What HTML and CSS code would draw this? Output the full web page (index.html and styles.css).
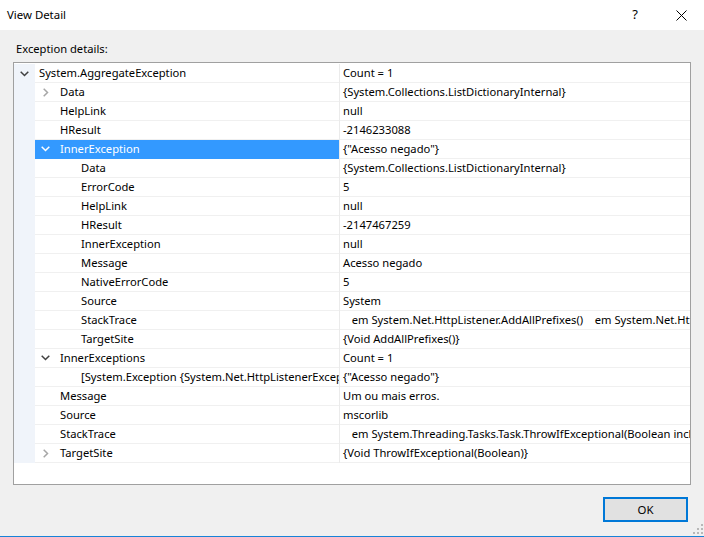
FILE: index.html
```html
<!DOCTYPE html>
<html>
<head>
<meta charset="utf-8">
<title>View Detail</title>
<link rel="stylesheet" href="styles.css">
</head>
<body>
<div class="window">
  <div class="titlebar">
    <div class="title">View Detail</div>
    <div class="caption-btn help">?</div>
    <div class="caption-btn close">
      <svg width="11" height="11" viewBox="0 0 11 11"><path d="M0.5 0.5 L10.5 10.5 M10.5 0.5 L0.5 10.5" stroke="#000" stroke-width="1" fill="none"/></svg>
    </div>
  </div>
  <div class="main">
    <div class="label">Exception details:</div>
    <div class="tree">
      <div class="row"><div class="strip"><svg class="chev-down" width="9" height="6" viewBox="0 0 9 6"><polyline points="0.7,0.7 4.5,4.5 8.3,0.7"/></svg></div><div class="name">System.AggregateException</div><div class="sep"></div><div class="value">Count = 1</div></div>
      <div class="row"><div class="strip"></div><div class="name"><span class="tog"><svg class="chev-right" width="6" height="9" viewBox="0 0 6 9"><polyline points="0.7,0.7 4.5,4.5 0.7,8.3"/></svg></span>Data</div><div class="sep"></div><div class="value">{System.Collections.ListDictionaryInternal}</div></div>
      <div class="row"><div class="strip"></div><div class="name"><span class="tog"></span>HelpLink</div><div class="sep"></div><div class="value">null</div></div>
      <div class="row"><div class="strip"></div><div class="name"><span class="tog"></span>HResult</div><div class="sep"></div><div class="value">-2146233088</div></div>
      <div class="row selected"><div class="strip"></div><div class="name"><span class="tog"><svg class="chev-down" width="9" height="6" viewBox="0 0 9 6"><polyline points="0.7,0.7 4.5,4.5 8.3,0.7"/></svg></span>InnerException</div><div class="sep"></div><div class="value">{"Acesso negado"}</div></div>
      <div class="row"><div class="strip"></div><div class="name"><span class="tog"></span><span class="tog"></span>Data</div><div class="sep"></div><div class="value">{System.Collections.ListDictionaryInternal}</div></div>
      <div class="row"><div class="strip"></div><div class="name"><span class="tog"></span><span class="tog"></span>ErrorCode</div><div class="sep"></div><div class="value">5</div></div>
      <div class="row"><div class="strip"></div><div class="name"><span class="tog"></span><span class="tog"></span>HelpLink</div><div class="sep"></div><div class="value">null</div></div>
      <div class="row"><div class="strip"></div><div class="name"><span class="tog"></span><span class="tog"></span>HResult</div><div class="sep"></div><div class="value">-2147467259</div></div>
      <div class="row"><div class="strip"></div><div class="name"><span class="tog"></span><span class="tog"></span>InnerException</div><div class="sep"></div><div class="value">null</div></div>
      <div class="row"><div class="strip"></div><div class="name"><span class="tog"></span><span class="tog"></span>Message</div><div class="sep"></div><div class="value">Acesso negado</div></div>
      <div class="row"><div class="strip"></div><div class="name"><span class="tog"></span><span class="tog"></span>NativeErrorCode</div><div class="sep"></div><div class="value">5</div></div>
      <div class="row"><div class="strip"></div><div class="name"><span class="tog"></span><span class="tog"></span>Source</div><div class="sep"></div><div class="value">System</div></div>
      <div class="row"><div class="strip"></div><div class="name"><span class="tog"></span><span class="tog"></span>StackTrace</div><div class="sep"></div><div class="value">   em System.Net.HttpListener.AddAllPrefixes()    em System.Net.HttpListener.Start()</div></div>
      <div class="row"><div class="strip"></div><div class="name"><span class="tog"></span><span class="tog"></span>TargetSite</div><div class="sep"></div><div class="value">{Void AddAllPrefixes()}</div></div>
      <div class="row"><div class="strip"></div><div class="name"><span class="tog"><svg class="chev-down" width="9" height="6" viewBox="0 0 9 6"><polyline points="0.7,0.7 4.5,4.5 8.3,0.7"/></svg></span>InnerExceptions</div><div class="sep"></div><div class="value">Count = 1</div></div>
      <div class="row"><div class="strip"></div><div class="name"><span class="tog"></span><span class="tog"></span>[System.Exception {System.Net.HttpListenerException}]</div><div class="sep"></div><div class="value">{"Acesso negado"}</div></div>
      <div class="row"><div class="strip"></div><div class="name"><span class="tog"></span>Message</div><div class="sep"></div><div class="value">Um ou mais erros.</div></div>
      <div class="row"><div class="strip"></div><div class="name"><span class="tog"></span>Source</div><div class="sep"></div><div class="value">mscorlib</div></div>
      <div class="row"><div class="strip"></div><div class="name"><span class="tog"></span>StackTrace</div><div class="sep"></div><div class="value">   em System.Threading.Tasks.Task.ThrowIfExceptional(Boolean includeTaskCanceledExceptions)</div></div>
      <div class="row"><div class="strip"></div><div class="name"><span class="tog"><svg class="chev-right" width="6" height="9" viewBox="0 0 6 9"><polyline points="0.7,0.7 4.5,4.5 0.7,8.3"/></svg></span>TargetSite</div><div class="sep"></div><div class="value">{Void ThrowIfExceptional(Boolean)}</div></div>
    </div>
    <div class="footer">
      <div class="ok-btn">OK</div>
    </div>
  </div>
  <div class="grip">
    <svg width="10" height="10" viewBox="0 0 10 10" fill="#b8b8b8"><rect x="8" y="0" width="2" height="2"/><rect x="4" y="4" width="2" height="2"/><rect x="8" y="4" width="2" height="2"/><rect x="0" y="8" width="2" height="2"/><rect x="4" y="8" width="2" height="2"/><rect x="8" y="8" width="2" height="2"/></svg>
  </div>
</div>
</body>
</html>
```
FILE: styles.css
```css
html, body {
  margin: 0;
  padding: 0;
}
body {
  font-family: "Noto Sans", "Open Sans", sans-serif;
  font-size: 11.2px;
  color: #000;
  background: #f0f0f0;
}
.window {
  position: relative;
  width: 704px;
  height: 537px;
  box-sizing: border-box;
  border-bottom: 1px solid #1883d7;
  background: #f0f0f0;
  display: flex;
  flex-direction: column;
}
.titlebar {
  height: 30px;
  background: #fff;
  display: flex;
  align-items: center;
  flex-shrink: 0;
}
.title {
  flex: 1;
  padding-left: 7px;
  font-size: 11.4px;
  line-height: 15px;
  padding-bottom: 1px;
}
.caption-btn {
  width: 46px;
  height: 30px;
  display: flex;
  align-items: center;
  justify-content: center;
}
.help {
  font-size: 13px;
  padding-bottom: 2px;
  box-sizing: border-box;
}
.close svg {
  display: block;
}
.main {
  padding: 11px 0 0 13px;
  display: flex;
  flex-direction: column;
}
.label {
  line-height: 15px;
  margin-left: 3px;
  margin-bottom: 6px;
}
.tree {
  width: 678px;
  height: 423px;
  box-sizing: border-box;
  border: 1px solid #a0a0a0;
  background: #fff;
  padding-top: 1px;
  overflow: hidden;
}
.row {
  display: grid;
  grid-template-columns: 21px 304px 1px 350px;
  height: 19px;
}
.strip {
  background: #f0f4fa;
  display: flex;
  align-items: center;
  justify-content: center;
}
.name, .value {
  border-bottom: 1px solid #f0f0f0;
  line-height: 18px;
  white-space: pre;
  overflow: hidden;
  display: flex;
  align-items: center;
}
.name {
  padding-left: 4px;
}
.value {
  padding-left: 3px;
}
.sep {
  background: #ebebeb;
}
.tog {
  width: 21px;
  height: 18px;
  flex-shrink: 0;
  display: flex;
  align-items: center;
  justify-content: center;
}
.name .tog:first-child {
  margin-left: -4px;
}
.name .tog:last-of-type {
  margin-right: 4px;
}
.name .tog + .tog {
  margin-left: 0;
}
.chev-down polyline {
  fill: none;
  stroke: #404040;
  stroke-width: 1.5;
}
.chev-right polyline {
  fill: none;
  stroke: #a6a6a6;
  stroke-width: 1.5;
}
.selected .name {
  background: #3399ff;
  color: #fff;
  border-bottom-color: #3399ff;
}
.selected .chev-down polyline {
  stroke: #fff;
}
.footer {
  display: flex;
  justify-content: flex-end;
  width: 675px;
  margin-top: 12px;
}
.ok-btn {
  width: 85px;
  height: 25px;
  box-sizing: border-box;
  border: 2px solid #0078d7;
  background: #e1e1e1;
  display: flex;
  align-items: center;
  justify-content: center;
  font-size: 11.4px;
}
.grip {
  position: absolute;
  right: 1px;
  bottom: 2px;
  width: 10px;
  height: 10px;
}
.grip svg {
  display: block;
}
```
